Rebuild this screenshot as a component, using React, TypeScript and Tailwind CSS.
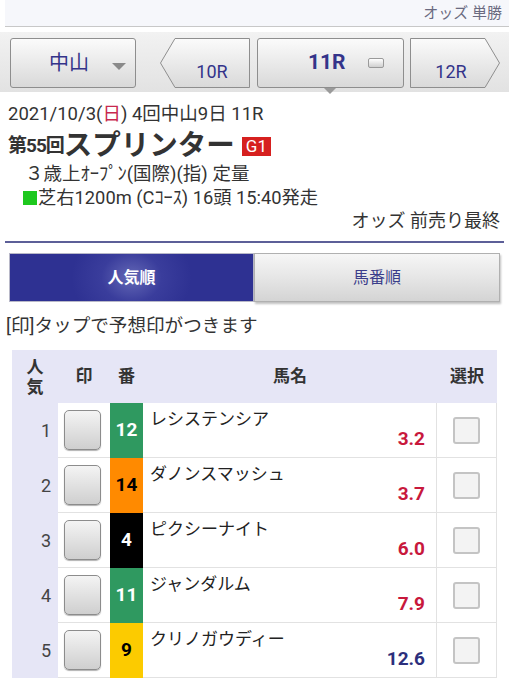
import React from 'react';

const font = { fontFamily: 'Roboto, "Noto Sans CJK JP", sans-serif' };

type Horse = { rank: number; waku: string; wakuText: string; no: number; name: string; odds: string; hot: boolean };

const horses: Horse[] = [
  { rank: 1, waku: 'bg-[#2f9960]', wakuText: 'text-white', no: 12, name: 'レシステンシア', odds: '3.2', hot: true },
  { rank: 2, waku: 'bg-[#ff8a00]', wakuText: 'text-black', no: 14, name: 'ダノンスマッシュ', odds: '3.7', hot: true },
  { rank: 3, waku: 'bg-black', wakuText: 'text-white', no: 4, name: 'ピクシーナイト', odds: '6.0', hot: true },
  { rank: 4, waku: 'bg-[#2f9960]', wakuText: 'text-white', no: 11, name: 'ジャンダルム', odds: '7.9', hot: true },
  { rank: 5, waku: 'bg-[#fccb00]', wakuText: 'text-black', no: 9, name: 'クリノガウディー', odds: '12.6', hot: false },
];

function ArrowButton({ dir, label }: { dir: 'left' | 'right'; label: string }) {
  const pts = dir === 'left' ? '15,0.5 89.5,0.5 89.5,49.5 15,49.5 0.5,25' : '0.5,0.5 75,0.5 89.5,25 75,49.5 0.5,49.5';
  return (
    <div className="relative w-[90px] h-[50px] flex items-end justify-center pb-[3px]">
      <svg className="absolute inset-0" width="90" height="50" viewBox="0 0 90 50">
        <defs>
          <linearGradient id={`g-${dir}`} x1="0" y1="0" x2="0" y2="1">
            <stop offset="0" stopColor="#fbfbfb" />
            <stop offset="1" stopColor="#d9d9d9" />
          </linearGradient>
        </defs>
        <polygon points={pts} fill={`url(#g-${dir})`} stroke="#8e8e8e" strokeWidth="1" strokeLinejoin="round" />
      </svg>
      <span className={`relative text-[18px] text-[#34348a] ${dir === 'left' ? 'pl-[14px]' : 'pr-[8px]'}`}>{label}</span>
    </div>
  );
}

export default function App() {
  return (
    <div className="w-[509px] h-[680px] overflow-hidden bg-white text-[#222]" style={font}>
      {/* top bar */}
      <div className="h-[27px] ml-[5px] bg-[#f6f7fb] border-b border-[#c8c8c8] flex items-center justify-end pr-[7px]">
        <span className="text-[15px] text-[#6a6a80]">オッズ 単勝</span>
      </div>

      {/* race nav */}
      <div className="mt-[5px] h-[60px] bg-gradient-to-b from-[#f2f2f2] to-[#e2e2e2] flex items-center pl-[10px] pt-[2px]">
        <div className="w-[126px] h-[50px] rounded-[3px] border border-[#8e8e8e] bg-gradient-to-b from-[#fbfbfb] to-[#d9d9d9] flex items-center pl-[38px] relative">
          <span className="text-[20px] text-[#34348a]">中山</span>
          <span className="absolute right-[9px] top-[24px] w-0 h-0 border-l-[7px] border-r-[7px] border-t-[7px] border-l-transparent border-r-transparent border-t-[#8a8a8a]" />
        </div>
        <div className="ml-[24px]">
          <ArrowButton dir="left" label="10R" />
        </div>
        <div className="ml-[7px] relative w-[147px] h-[50px] rounded-[3px] border border-[#8e8e8e] bg-gradient-to-b from-[#fbfbfb] to-[#d9d9d9] flex items-center pl-[50px]">
          <span className="text-[21px] font-bold text-[#34348a]">11R</span>
          <span className="ml-[22px] w-[16px] h-[10px] rounded-[2px] border border-[#9a9a9a] bg-gradient-to-b from-white to-[#d0d0d0]" />
          <span className="absolute left-[66px] -bottom-[7px] w-0 h-0 border-l-[6px] border-r-[6px] border-t-[6px] border-l-transparent border-r-transparent border-t-[#9a9a9a]" />
        </div>
        <div className="ml-[6px]">
          <ArrowButton dir="right" label="12R" />
        </div>
      </div>

      {/* race info */}
      <div className="px-[8px] pt-[12px]">
        <div className="h-[22px] flex items-center text-[18.5px] text-[#333]">
          2021/10/3(<span className="text-[#c8284e]">日</span>) 4回中山9日 11R
        </div>
        <div className="h-[36px] flex items-center mt-[2px]">
          <span className="text-[19px] font-bold text-[#333] tracking-[-1px]">第55回</span>
          <span className="text-[28.5px] font-bold text-[#333] leading-none">スプリンター</span>
          <span className="ml-[7px] bg-[#d6201f] text-white text-[17px] leading-[18px] px-[4px] h-[19px] flex items-center">G1</span>
        </div>
        <div className="h-[22px] flex items-center pl-[17px] text-[18.5px] text-[#333]">３歳上ｵｰﾌﾟﾝ(国際)(指) 定量</div>
        <div className="h-[23px] flex items-center pl-[15px] text-[18.3px] text-[#333]">
          <span className="w-[14px] h-[14px] bg-[#1ec81e] mr-[1px]" />
          芝右1200m (Cｺｰｽ) 16頭 15:40発走
        </div>
        <div className="h-[23px] flex items-center justify-end pr-[1px] text-[18px] text-[#333]">オッズ 前売り最終</div>
      </div>
      <div className="mx-[5px] mt-[9px] h-[2px] bg-[#5c5f98]" />

      {/* tabs */}
      <div className="mt-[10px] mx-[9px] flex h-[49px]">
        <div className="w-[245px] border border-[#b8b8c8] bg-[#2e3192] bg-[radial-gradient(ellipse_60px_50px_at_50%_50%,#6468b6_0%,#3a3d9c_50%,#2e3192_100%)] flex items-center justify-center">
          <span className="text-white font-bold text-[16px]">人気順</span>
        </div>
        <div className="flex-1 border border-[#b0b0b0] bg-gradient-to-b from-[#f6f6f6] via-[#e6e6e6] to-[#d4d4d4] shadow-[1px_2px_2px_rgba(0,0,0,0.25)] flex items-center justify-center">
          <span className="text-[#3a3d8a] text-[16px]">馬番順</span>
        </div>
      </div>

      <div className="mt-[12px] pl-[6px] h-[26px] flex items-center text-[18.6px] text-[#333]">[印]タップで予想印がつきます</div>

      {/* table */}
      <div className="mt-[10px] ml-[12px] w-[485px]">
        <div className="grid grid-cols-[46px_52px_33px_294px_60px] h-[53px] bg-[#e6e6f6] text-[17px] font-bold text-[#333]">
          <div className="flex flex-col items-center justify-center leading-[20px]">
            <span>人</span>
            <span>気</span>
          </div>
          <div className="flex items-center justify-center">印</div>
          <div className="flex items-center justify-center">番</div>
          <div className="flex items-center justify-center">馬名</div>
          <div className="flex items-center justify-center">選択</div>
        </div>
        {horses.map((h) => (
          <div key={h.rank} className="grid grid-cols-[46px_52px_33px_294px_60px] h-[55px]">
            <div className="bg-[#e6e6f6] flex items-center justify-end pr-[7px] text-[18px] text-[#444]">{h.rank}</div>
            <div className="border-b border-[#e2e2e2] flex items-center justify-center pr-[3px]">
              <div className="w-[37px] h-[40px] rounded-[5px] border border-[#8c8c8c] bg-gradient-to-b from-[#f4f4f4] to-[#cfcfcf] shadow-[0_1px_1px_rgba(0,0,0,0.3)]" />
            </div>
            <div className={`${h.waku} ${h.wakuText} flex items-center justify-center text-[19px] font-bold`}>{h.no}</div>
            <div className="border-b border-[#e2e2e2] border-r relative px-[7px] pt-[5px]">
              <div className="text-[17px] text-[#222] leading-[22px]">{h.name}</div>
              <div className={`absolute right-[11px] bottom-[4px] text-[19px] font-bold ${h.hot ? 'text-[#c8183c]' : 'text-[#2c2f7c]'}`}>{h.odds}</div>
            </div>
            <div className="border-b border-r border-[#e2e2e2] flex items-center justify-center">
              <div className="w-[27px] h-[27px] rounded-[3px] border-2 border-[#c4c4c4] bg-[#f3f3f3]" />
            </div>
          </div>
        ))}
      </div>
    </div>
  );
}
